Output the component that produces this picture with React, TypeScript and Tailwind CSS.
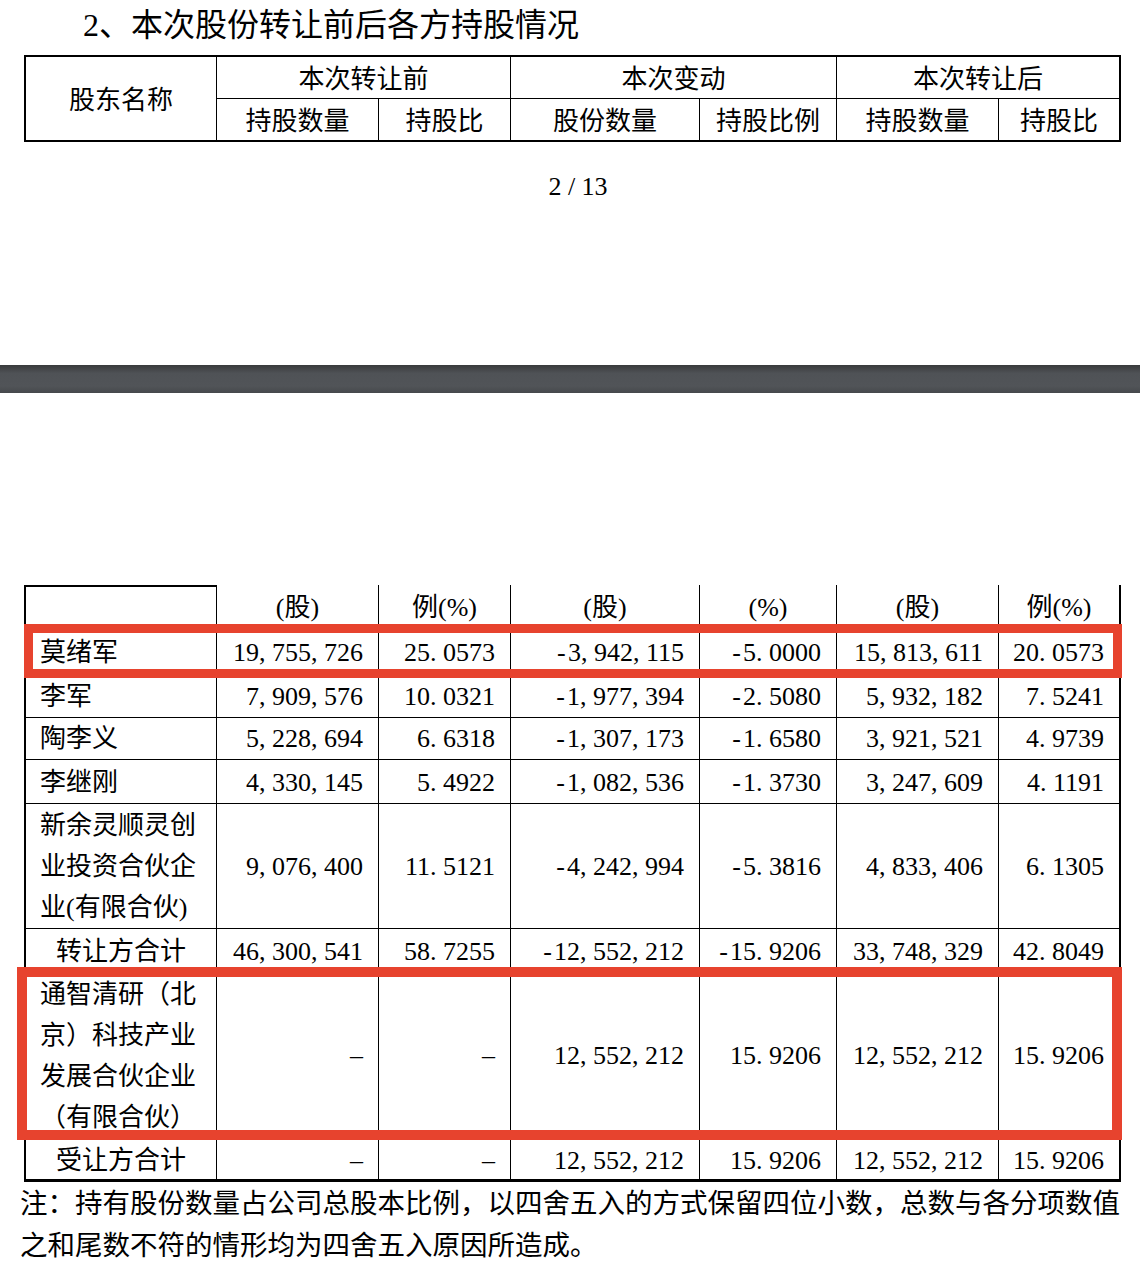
import React from 'react';

const cols = 'grid grid-cols-[191px_162px_132px_189px_137px_162px_120px]';

// half-width punctuation, like the song-style font in the pdf
const Num = ({ v }: { v: string }) => (
  <>
    {v.split('').map((c, i) =>
      c === '-' ? (
        <span key={i} className="inline-block w-[0.5em] text-center">
          {c}
        </span>
      ) : c === ',' || c === '.' ? (
        <span key={i} className="inline-block w-[0.5em]">
          {c}
        </span>
      ) : (
        c
      )
    )}
  </>
);

interface Row {
  h: string;
  name: string[];
  center?: boolean;
  last?: boolean;
  vals: string[];
}

const rows: Row[] = [
  { h: 'h-[44px]', name: ['莫绪军'], vals: ['19,755,726', '25.0573', '-3,942,115', '-5.0000', '15,813,611', '20.0573'] },
  { h: 'h-[42px]', name: ['李军'], vals: ['7,909,576', '10.0321', '-1,977,394', '-2.5080', '5,932,182', '7.5241'] },
  { h: 'h-[44px]', name: ['陶李义'], vals: ['5,228,694', '6.6318', '-1,307,173', '-1.6580', '3,921,521', '4.9739'] },
  { h: 'h-[43px]', name: ['李继刚'], vals: ['4,330,145', '5.4922', '-1,082,536', '-1.3730', '3,247,609', '4.1191'] },
  {
    h: 'h-[126px]',
    name: ['新余灵顺灵创', '业投资合伙企', '业(有限合伙)'],
    vals: ['9,076,400', '11.5121', '-4,242,994', '-5.3816', '4,833,406', '6.1305'],
  },
  { h: 'h-[43px]', name: ['转让方合计'], center: true, vals: ['46,300,541', '58.7255', '-12,552,212', '-15.9206', '33,748,329', '42.8049'] },
  {
    h: 'h-[166px]',
    name: ['通智清研（北', '京）科技产业', '发展合伙企业', '（有限合伙）'],
    vals: ['–', '–', '12,552,212', '15.9206', '12,552,212', '15.9206'],
  },
  { h: 'h-[43px]', name: ['受让方合计'], center: true, last: true, vals: ['–', '–', '12,552,212', '15.9206', '12,552,212', '15.9206'] },
];

const subHeads = ['(股)', '例(%)', '(股)', '(%)', '(股)', '例(%)'];

export default function App() {
  return (
    <div className="relative w-[1140px] h-[1272px] overflow-hidden bg-white text-black font-['Liberation_Serif','Noto_Sans_CJK_SC',serif] text-[26px]">
      {/* page 2 of the pdf (bottom part) */}
      <div className="h-[365px]">
        <div className="h-[55px] pl-[83px] text-[32px] leading-[50px]">2、本次股份转让前后各方持股情况</div>

        <div className={`${cols} grid-rows-[42px_41px] ml-[24px] w-[1097px] border-2 border-black leading-none`}>
          <div className="row-span-2 flex items-center justify-center pt-[4px] border-r border-black">股东名称</div>
          <div className="col-span-2 flex items-center justify-center pt-[4px] border-r border-b border-black">本次转让前</div>
          <div className="col-span-2 flex items-center justify-center pt-[4px] border-r border-b border-black">本次变动</div>
          <div className="col-span-2 flex items-center justify-center pt-[4px] border-b border-black">本次转让后</div>
          <div className="flex items-center justify-center pt-[4px] border-r border-black">持股数量</div>
          <div className="flex items-center justify-center pt-[4px] border-r border-black">持股比</div>
          <div className="flex items-center justify-center pt-[4px] border-r border-black">股份数量</div>
          <div className="flex items-center justify-center pt-[4px] border-r border-black">持股比例</div>
          <div className="flex items-center justify-center pt-[4px] border-r border-black">持股数量</div>
          <div className="flex items-center justify-center pt-[4px]">持股比</div>
        </div>

        <div className="mt-[30px] h-[30px] pl-[16px] text-center leading-[30px]">2 / 13</div>
      </div>

      {/* viewer gap between pages */}
      <div className="h-[28px] bg-[linear-gradient(to_bottom,#393a3c,#4f5256_30%,#515458_75%,#46494c)]" />

      {/* page 3 */}
      <div className="pt-[192px]">
        <div className="ml-[24px] w-[1097px] border-x-2 border-b-[3px] border-black leading-none">
          <div className={`${cols} h-[43px]`}>
            <div className="border-t-2 border-r border-b border-black" />
            {subHeads.map((s, i) => (
              <div
                key={i}
                className={`flex items-center justify-center pt-[4px] border-b border-black ${i < 5 ? 'border-r' : ''}`}
              >
                {s}
              </div>
            ))}
          </div>

          {rows.map((r, ri) => (
            <div key={ri} className={`${cols} ${r.h}`}>
              <div
                className={`flex flex-col justify-center pt-[4px] border-r border-black ${r.last ? '' : 'border-b'} ${
                  r.center ? 'items-center' : 'pl-[14px]'
                }`}
              >
                {r.name.map((n, ni) => (
                  <div key={ni} className="leading-[41px] whitespace-nowrap">
                    {n}
                  </div>
                ))}
              </div>
              {r.vals.map((v, vi) => (
                <div
                  key={vi}
                  className={`flex items-center justify-end pt-[4px] pr-[15px] border-black ${r.last ? '' : 'border-b'} ${
                    vi < 5 ? 'border-r' : ''
                  }`}
                >
                  <span className="whitespace-nowrap">
                    <Num v={v} />
                  </span>
                </div>
              ))}
            </div>
          ))}
        </div>

        <p className="pl-[20px] pt-[1px] text-[27.5px] leading-[42px]">
          注：持有股份数量占公司总股本比例，以四舍五入的方式保留四位小数，总数与各分项数值
          <br />
          之和尾数不符的情形均为四舍五入原因所造成。
        </p>
      </div>

      {/* red highlight boxes drawn over the table */}
      <div className="absolute left-[24px] top-[624px] w-[1098px] h-[54px] border-[9px] border-[#e7432e]" />
      <div className="absolute left-[17px] top-[967px] w-[1105px] h-[173px] border-[10px] border-[#e7432e]" />
    </div>
  );
}
